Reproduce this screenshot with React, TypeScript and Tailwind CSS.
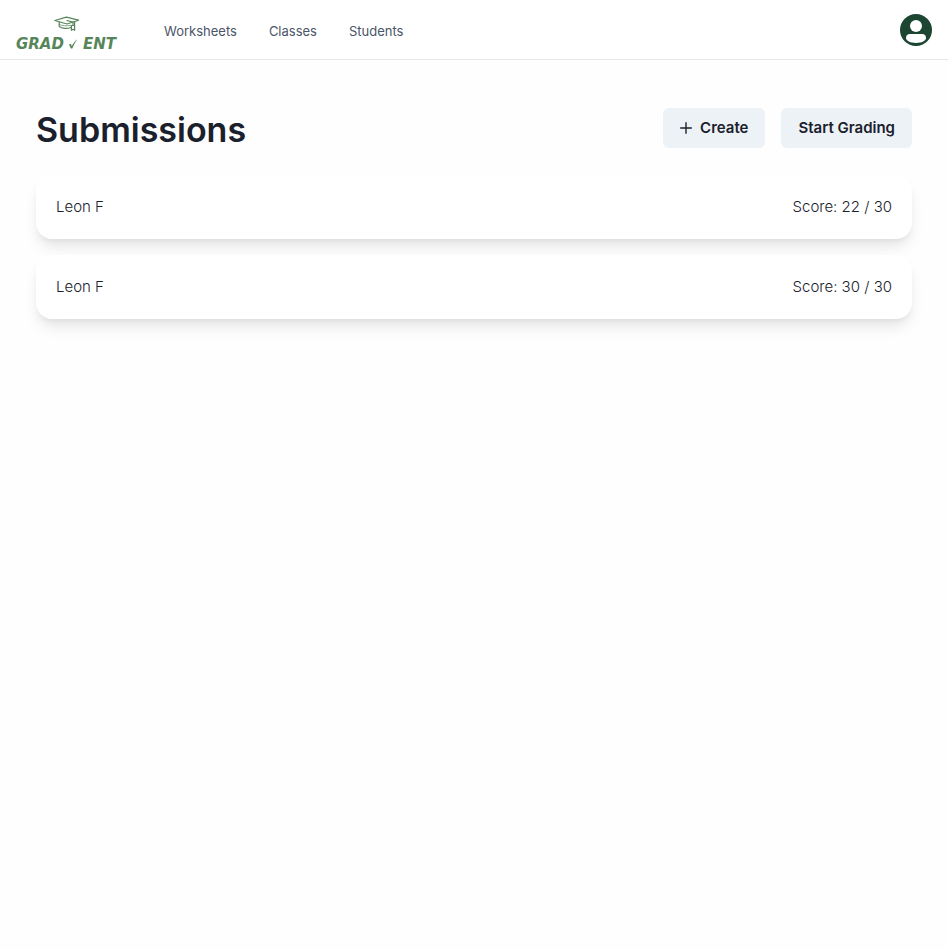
const links = [
  { label: "Worksheets", href: "#worksheets" },
  { label: "Classes", href: "#classes" },
  { label: "Students", href: "#students" },
];

const submissions = [
  { id: 1, student: "Leon F", score: 22, total: 30 },
  { id: 2, student: "Leon F", score: 30, total: 30 },
];

function Logo() {
  return (
    <a href="#home" aria-label="Home" className="flex w-25 flex-col pt-3 text-[#57855a]">
      <svg
        viewBox="0 0 26 16"
        className="ml-9.5 h-4 w-6.5"
        fill="none"
        stroke="currentColor"
        strokeWidth="1.2"
        strokeLinejoin="round"
        strokeLinecap="round"
      >
        <path d="M.8 4.5 12.4 1.2 24.6 4.2 13 8z" />
        <path d="M5.200 6.300v4.200c2.600 2.200 8 2.400 11.600 1" />
        <path d="M5.200 8.500c3 1.400 8 1.800 11.600.8" strokeWidth=".7" />
        <path d="M13 4.500 19 6.200v3.300" />
        <path d="M17.400 9.500h3.200v4.800l-1.600-1-1.600 1zM20.600 5.600v4" />
      </svg>
      <span className="flex items-center justify-between font-['DejaVu_Sans'] text-[15px] leading-6 font-bold italic">
        <span>GRAD</span>
        <svg viewBox="0 0 10 10" className="h-2.5 w-2.5" fill="currentColor">
          <path d="M1 5.600 2.800 4.800 3.800 7.200C5.100 4.400 6.800 2.200 9.400.2 7.300 3.200 5.600 6.200 4.300 9.600H2.900z" />
        </svg>
        <span>ENT</span>
      </span>
    </a>
  );
}

function PlusIcon() {
  return (
    <svg
      viewBox="0 0 12 12"
      className="size-3"
      fill="none"
      stroke="currentColor"
      strokeWidth="1.4"
      strokeLinecap="round"
    >
      <path d="M6 .7v10.600M.7 6h10.600" />
    </svg>
  );
}

function Avatar() {
  return (
    <button type="button" aria-label="Account" className="size-8 cursor-pointer">
      <svg viewBox="0 0 32 32" className="size-8">
        <circle cx="16" cy="16" r="16" fill="#1c4532" />
        <circle cx="16" cy="12" r="6" fill="#fff" />
        <path
          d="M10 20h12c2.600 0 4 1.600 4 3.800 0 3.200-4.500 5.200-10 5.200S6 27 6 23.800C6 21.600 7.400 20 10 20z"
          fill="#fff"
        />
      </svg>
    </button>
  );
}

export default function App() {
  return (
    <div className="min-h-screen bg-[#fefefe] font-['Inter',sans-serif] text-[15px] text-[#1a202c]">
      <header className="flex h-15 items-center justify-between border-b border-gray-200 bg-white px-4">
        <div className="flex items-center gap-12">
          <Logo />
          <nav className="flex gap-8 pt-1 text-[13px] text-[#4a5568]">
            {links.map((link) => (
              <a key={link.label} href={link.href} className="hover:text-[#1a202c]">
                {link.label}
              </a>
            ))}
          </nav>
        </div>
        <Avatar />
      </header>

      <main className="px-9 pt-12">
        <div className="flex items-start justify-between">
          <h1 className="text-[34px] leading-[43px] font-semibold">Submissions</h1>
          <div className="flex gap-4 font-semibold">
            <button
              type="button"
              className="flex h-10 cursor-pointer items-center gap-2 rounded-md bg-[#edf2f7] px-[17px] hover:bg-[#e2e8f0]"
            >
              <PlusIcon />
              Create
            </button>
            <button
              type="button"
              className="h-10 cursor-pointer rounded-md bg-[#edf2f7] px-[17px] hover:bg-[#e2e8f0]"
            >
              Start Grading
            </button>
          </div>
        </div>

        <ul className="mt-6 flex flex-col gap-4">
          {submissions.map((item) => (
            <li
              key={item.id}
              className="flex justify-between rounded-2xl bg-white p-5 leading-6 font-light shadow-[0_10px_15px_-3px_rgba(0,0,0,0.1),0_4px_6px_-2px_rgba(0,0,0,0.05)]"
            >
              <span>{item.student}</span>
              <span>{`Score: ${item.score} / ${item.total}`}</span>
            </li>
          ))}
        </ul>
      </main>
    </div>
  );
}
